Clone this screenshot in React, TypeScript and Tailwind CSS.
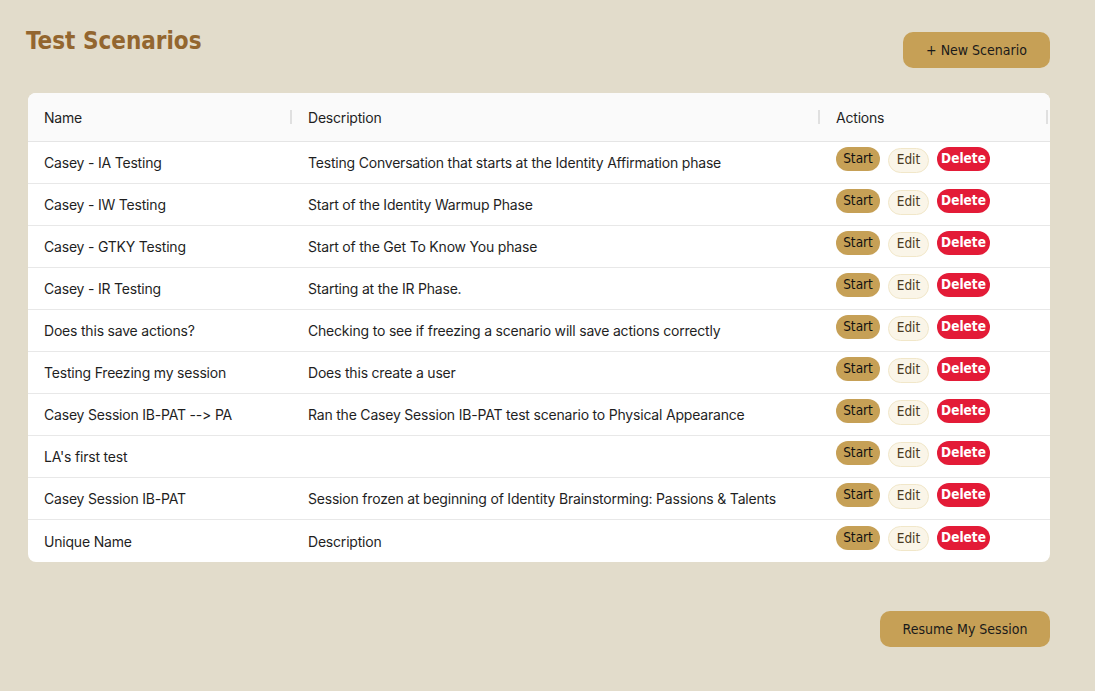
const scenarios = [
  { name: "Casey - IA Testing", description: "Testing Conversation that starts at the Identity Affirmation phase" },
  { name: "Casey - IW Testing", description: "Start of the Identity Warmup Phase" },
  { name: "Casey - GTKY Testing", description: "Start of the Get To Know You phase" },
  { name: "Casey - IR Testing", description: "Starting at the IR Phase." },
  { name: "Does this save actions?", description: "Checking to see if freezing a scenario will save actions correctly" },
  { name: "Testing Freezing my session", description: "Does this create a user" },
  { name: "Casey Session IB-PAT --> PA", description: "Ran the Casey Session IB-PAT test scenario to Physical Appearance" },
  { name: "LA's first test", description: "" },
  { name: "Casey Session IB-PAT", description: "Session frozen at beginning of Identity Brainstorming: Passions & Talents" },
  { name: "Unique Name", description: "Description" },
];

const tahoma = "font-['Tahoma','DejaVu_Sans_Condensed','DejaVu_Sans',sans-serif]";

function Divider({ right }: { right: string }) {
  return <span className={`absolute ${right} top-1/2 h-[14px] w-[2px] -translate-y-1/2 bg-[#e0e0e0]`} />;
}

export default function App() {
  return (
    <div className="min-h-[691px] bg-[#e2dccb] pl-[28px] pr-[45px] pt-[26px] font-['Inter','Noto_Sans',sans-serif]">
      <div className="flex items-start justify-between">
        <h1 className={`-ml-[2px] text-[24px] font-bold leading-[30px] text-[#93662f] ${tahoma}`}>
          Test Scenarios
        </h1>
        <button
          className={`mt-[6px] h-[36px] w-[147px] rounded-[10px] bg-[#c6a056] text-[14px] text-[#1a1a1a] ${tahoma}`}
        >
          + New Scenario
        </button>
      </div>

      <div className="mt-[25px] overflow-hidden rounded-lg bg-white">
        <table className="w-full table-fixed border-collapse text-sm tracking-[-0.2px] text-[#1f1f1f] [font-feature-settings:'calt'_0,'liga'_0]">
          <thead>
            <tr className="h-[48px] border-b border-[#e5e5e5] bg-[#fafafa]">
              <th className="relative w-[264px] px-4 pt-[2px] text-left font-normal">
                Name
                <Divider right="right-0" />
              </th>
              <th className="relative w-[528px] px-4 pt-[2px] text-left font-normal">
                Description
                <Divider right="right-0" />
              </th>
              <th className="relative px-4 pt-[2px] text-left font-normal">
                Actions
                <Divider right="right-[2px]" />
              </th>
            </tr>
          </thead>
          <tbody>
            {scenarios.map((s, i) => {
              const last = i === scenarios.length - 1;
              return (
                <tr key={s.name} className={last ? "h-[43px]" : "h-[42px] border-b border-[#e8e8e8]"}>
                  <td className="px-4 pt-[2px]">{s.name}</td>
                  <td className="px-4 pt-[2px]">{s.description}</td>
                  <td className="px-4">
                    <div className={`-mt-[6px] flex items-center gap-2 text-[13.5px] tracking-normal ${tahoma}`}>
                      <button className="h-[24px] w-[44px] rounded-full bg-[#c6a056] text-[#111]">
                        Start
                      </button>
                      <button className="mt-[2px] h-[25px] w-[41px] rounded-full border border-[#f1e7c9] bg-[#faf5e8] text-[#4a3a22]">
                        Edit
                      </button>
                      <button className="h-[24px] w-[53px] rounded-full bg-[#e31b37] font-bold text-white">
                        Delete
                      </button>
                    </div>
                  </td>
                </tr>
              );
            })}
          </tbody>
        </table>
      </div>

      <div className="mt-[49px] flex justify-end">
        <button
          className={`h-[36px] w-[170px] rounded-[10px] bg-[#c6a056] text-[14px] text-[#1a1a1a] ${tahoma}`}
        >
          Resume My Session
        </button>
      </div>
    </div>
  );
}
